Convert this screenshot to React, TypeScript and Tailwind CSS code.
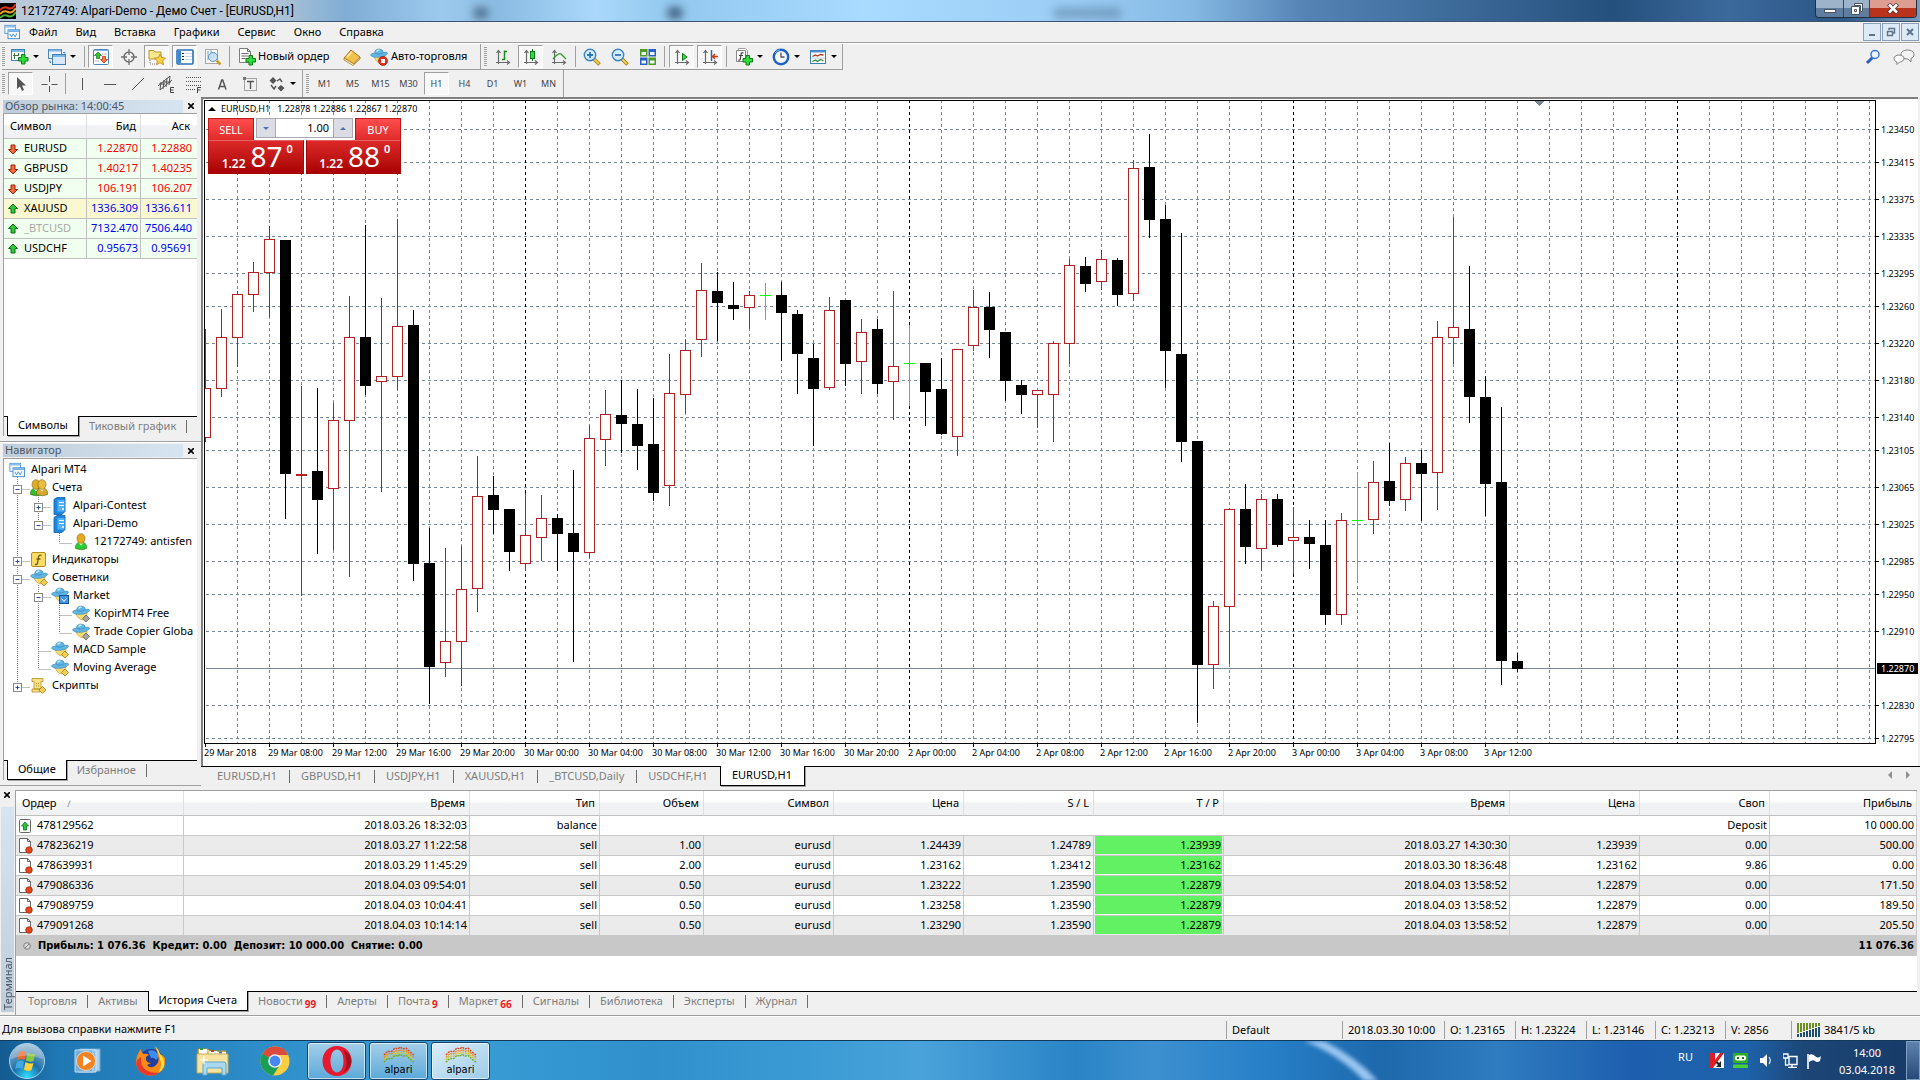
import { ReactNode } from "react";
import clsx from "clsx";

/* ---------- data ---------- */

// kind, high, body top, body bottom, low (all in window rows)
type Candle = ["r" | "k" | "g", number, number, number, number];

const PLOT_TOP = 101;
const CANDLE_STEP = 16;

const candles: Candle[] = [
    ["r", 329, 388, 438, 442], ["r", 309, 337, 389, 397], ["r", 291, 294, 338, 367], ["r", 262, 272, 295, 312],
    ["r", 226, 239, 273, 317], ["k", 240, 240, 474, 519], ["r", 386, 474, 476, 596], ["k", 388, 471, 500, 554],
    ["r", 403, 420, 489, 550], ["r", 296, 337, 421, 577], ["k", 225, 337, 386, 395], ["r", 298, 376, 382, 492],
    ["r", 219, 326, 377, 390], ["k", 310, 325, 564, 581], ["k", 528, 563, 667, 704], ["r", 548, 641, 663, 677],
    ["r", 546, 589, 642, 686], ["r", 456, 496, 589, 612], ["k", 476, 495, 510, 534], ["k", 509, 509, 552, 571],
    ["r", 493, 535, 564, 571], ["r", 495, 518, 538, 561], ["k", 514, 518, 534, 571], ["k", 470, 533, 552, 662],
    ["r", 425, 438, 553, 558], ["r", 390, 414, 440, 466], ["k", 380, 415, 424, 453], ["k", 389, 424, 446, 470],
    ["k", 398, 444, 493, 501], ["r", 354, 393, 486, 506], ["r", 339, 350, 395, 413], ["r", 263, 290, 340, 357],
    ["k", 272, 291, 303, 341], ["k", 282, 305, 309, 320], ["r", 291, 295, 308, 329], ["g", 283, 295, 296, 320],
    ["k", 282, 295, 313, 361], ["k", 310, 314, 354, 394], ["k", 344, 358, 389, 446], ["r", 297, 310, 388, 390],
    ["k", 300, 300, 364, 386], ["r", 319, 332, 362, 394], ["k", 319, 329, 384, 394], ["r", 291, 366, 382, 420],
    ["g", 325, 363, 364, 406], ["k", 363, 363, 392, 426], ["k", 358, 389, 434, 435], ["r", 349, 349, 437, 456],
    ["r", 290, 307, 346, 351], ["k", 292, 307, 330, 358], ["k", 332, 332, 381, 401], ["k", 380, 385, 395, 414],
    ["r", 390, 390, 395, 428], ["r", 341, 343, 395, 442], ["r", 259, 265, 344, 364], ["k", 257, 266, 284, 292],
    ["r", 250, 259, 282, 290], ["k", 258, 260, 295, 306], ["r", 160, 168, 294, 301], ["k", 134, 167, 220, 238],
    ["k", 205, 219, 351, 388], ["k", 233, 354, 442, 462], ["k", 441, 441, 665, 723], ["r", 601, 606, 665, 689],
    ["r", 508, 509, 607, 664], ["k", 484, 509, 547, 564], ["r", 494, 499, 549, 570], ["k", 494, 499, 545, 547],
    ["r", 507, 537, 541, 574], ["k", 520, 537, 544, 569], ["k", 520, 545, 615, 625], ["r", 513, 520, 615, 625],
    ["g", 473, 520, 521, 581], ["r", 461, 482, 520, 534], ["k", 443, 481, 501, 506], ["r", 457, 463, 500, 511],
    ["k", 450, 463, 474, 521], ["r", 321, 337, 473, 510], ["r", 217, 327, 338, 364], ["k", 266, 329, 397, 423],
    ["k", 376, 397, 484, 516], ["k", 407, 482, 661, 685], ["k", 653, 661, 669, 672],
];

const prices: [number, string][] = [
    [28, "1.23450"], [61, "1.23415"], [98, "1.23375"], [135, "1.23335"], [172, "1.23295"], [205, "1.23260"],
    [242, "1.23220"], [279, "1.23180"], [316, "1.23140"], [349, "1.23105"], [386, "1.23065"], [423, "1.23025"],
    [460, "1.22985"], [493, "1.22950"], [530, "1.22910"], [604, "1.22830"], [637, "1.22795"],
];

const times = [
    "29 Mar 2018", "29 Mar 08:00", "29 Mar 12:00", "29 Mar 16:00", "29 Mar 20:00", "30 Mar 00:00", "30 Mar 04:00",
    "30 Mar 08:00", "30 Mar 12:00", "30 Mar 16:00", "30 Mar 20:00", "2 Apr 00:00", "2 Apr 04:00", "2 Apr 08:00",
    "2 Apr 12:00", "2 Apr 16:00", "2 Apr 20:00", "3 Apr 00:00", "3 Apr 04:00", "3 Apr 08:00", "3 Apr 12:00",
];

const quotes = [
    { symbol: "EURUSD", bid: "1.22870", ask: "1.22880", up: false },
    { symbol: "GBPUSD", bid: "1.40217", ask: "1.40235", up: false },
    { symbol: "USDJPY", bid: "106.191", ask: "106.207", up: false },
    { symbol: "XAUUSD", bid: "1336.309", ask: "1336.611", up: true, selected: true },
    { symbol: "_BTCUSD", bid: "7132.470", ask: "7506.440", up: true, muted: true },
    { symbol: "USDCHF", bid: "0.95673", ask: "0.95691", up: true },
];

const orders = [
    ["478236219", "2018.03.27 11:22:58", "sell", "1.00", "eurusd", "1.24439", "1.24789", "1.23939", "2018.03.27 14:30:30", "1.23939", "0.00", "500.00"],
    ["478639931", "2018.03.29 11:45:29", "sell", "2.00", "eurusd", "1.23162", "1.23412", "1.23162", "2018.03.30 18:36:48", "1.23162", "9.86", "0.00"],
    ["479086336", "2018.04.03 09:54:01", "sell", "0.50", "eurusd", "1.23222", "1.23590", "1.22879", "2018.04.03 13:58:52", "1.22879", "0.00", "171.50"],
    ["479089759", "2018.04.03 10:04:41", "sell", "0.50", "eurusd", "1.23258", "1.23590", "1.22879", "2018.04.03 13:58:52", "1.22879", "0.00", "189.50"],
    ["479091268", "2018.04.03 10:14:14", "sell", "0.50", "eurusd", "1.23290", "1.23590", "1.22879", "2018.04.03 13:58:52", "1.22879", "0.00", "205.50"],
];

const orderColumns = [
    { title: "Время", width: "w-[286px]" },
    { title: "Тип", width: "w-[130px]" },
    { title: "Объем", width: "w-[104px]" },
    { title: "Символ", width: "w-[130px]" },
    { title: "Цена", width: "w-[130px]" },
    { title: "S / L", width: "w-[130px]" },
    { title: "T / P", width: "w-[130px]" },
    { title: "Время", width: "w-[286px]" },
    { title: "Цена", width: "w-[130px]" },
    { title: "Своп", width: "w-[130px]" },
    { title: "Прибыль", width: "" },
];

/* ---------- icons ---------- */

function Icon({ children, size = 18 }: { children: ReactNode; size?: number }) {
    return (
        <svg width={size} height={size} viewBox="0 0 18 18" className="block shrink-0" aria-hidden="true">
            {children}
        </svg>
    );
}

const Plus = ({ x, y }: { x: number; y: number }) => (
    <path
        transform={`translate(${x} ${y})`}
        d="M3.500 .5h3.500v3h3v3.500h-3v3h-3.500v-3h-3v-3.500h3z"
        fill="#2fdc3c"
        stroke="#0a7d14"
    />
);

const NewChartIcon = () => (
    <Icon>
        <rect x="0.5" y="1.500" width="13" height="11" fill="#fff" stroke="#3f7fb8" />
        <path d="M1 3h12" stroke="#7fb4e4" strokeWidth="2" />
        <path d="M3.500 5v6M2 7.500h5M7.500 5v3" stroke="#3c6f45" fill="none" />
        <Plus x={7} y={6} />
    </Icon>
);

const ProfilesIcon = () => (
    <Icon>
        <rect x="0.5" y="1.500" width="13" height="9" fill="#eaf3fc" stroke="#4b86bd" />
        <path d="M1 2.500h12" stroke="#7fb4e4" strokeWidth="2" />
        <rect x="4.500" y="6.500" width="13" height="10" fill="#d6e8f9" stroke="#3f7fb8" />
        <path d="M5 8h12" stroke="#7fb4e4" strokeWidth="2" />
        <path d="M2 12.500v2h1M15 4.500h2v1" stroke="#3f7fb8" fill="none" />
    </Icon>
);

const MarketWatchIcon = () => (
    <Icon>
        <rect x="1.500" y="1.500" width="15" height="15" rx="1" fill="#fff" stroke="#4b86bd" />
        <path d="M2 2.500h14" stroke="#7fb4e4" />
        <path d="M10 6h5M3 13h4" stroke="#bbb" />
        <path d="M6 4l3.500 3.500h-2v3h-3v-3h-2z" fill="#32c43a" stroke="#13761a" strokeWidth=".7" />
        <path d="M12 15l-3.500-3.500h2v-3h3v3h2z" fill="#ff7a40" stroke="#b22a08" strokeWidth=".7" />
    </Icon>
);

const TargetIcon = () => (
    <Icon>
        <circle cx="9" cy="9" r="5" fill="none" stroke="#707070" strokeWidth="1.500" />
        <path d="M9 1v6M9 11v6M1 9h6M11 9h6" stroke="#707070" strokeWidth="1.300" />
    </Icon>
);

const NavigatorIcon = () => (
    <Icon>
        <path d="M1 2.500h5l1 1.500h6v7H1z" fill="#fbe78e" stroke="#b8952c" />
        <path d="M2 12v4h5" stroke="#7a7a7a" strokeDasharray="1 1" fill="none" />
        <path d="M12 6l1.700 3.600 3.900.5-2.900 2.700.8 4-3.500-2-3.500 2 .8-4-2.900-2.700 3.900-.5z" fill="#ffd23c" stroke="#b8862c" strokeWidth=".8" />
    </Icon>
);

const TerminalIcon = () => (
    <Icon>
        <rect x="1" y="2" width="16" height="14" rx="1" fill="#fff" stroke="#2b6fb8" strokeWidth="1.600" />
        <rect x="2" y="3" width="3" height="12" fill="#3a86d6" />
        <path d="M6 5.500h2M6 8.500h2M6 11.500h2" stroke="#222" />
        <path d="M9 5.500h7M9 8.500h7M9 11.500h7" stroke="#c8daf0" />
    </Icon>
);

const TesterIcon = () => (
    <Icon>
        <rect x="1.500" y="1.500" width="12" height="14" fill="#fff" stroke="#a8a8a8" />
        <path d="M4 3v9M7 2v8M10 4v6" stroke="#6aa0d0" />
        <circle cx="9" cy="9" r="4.500" fill="#bfe0f8" fillOpacity=".8" stroke="#5f93c4" />
        <path d="M12.500 12.500l4 4" stroke="#c9a22c" strokeWidth="2.500" />
    </Icon>
);

const NewOrderIcon = () => (
    <Icon>
        <path d="M1.500 .5h8l3 3v11h-11z" fill="#fff" stroke="#7d7d7d" />
        <path d="M9.500 .5v3h3M3.500 5.500h7M3.500 8h7M3.500 10.500h4" stroke="#6d6d6d" fill="none" />
        <Plus x={7.500} y={7} />
    </Icon>
);

const BookIcon = () => (
    <Icon>
        <path d="M1 10l7-8 9 7-6 7z" fill="#f0c24a" stroke="#a8761c" />
        <path d="M1 10v2l9 5.500 7-6.500V9l-6 7z" fill="#fff3c8" stroke="#a8761c" strokeWidth=".8" />
        <path d="M4 9l5-5" stroke="#fbe7a0" strokeWidth="2" />
    </Icon>
);

function Hat({ badge }: { badge?: "stop" | "gold" | "gray" | "bag" }) {
    return (
        <Icon>
            <path d="M4 8q1 6 7 7 4-1 4-7z" fill="#f8dc70" stroke="#c09a38" strokeWidth=".6" />
            <path d="M.5 7Q1 5 4.500 5.200 5 1 9 1t4.500 3.500Q17 3.500 17.500 5q0 2.500-7 4.200Q2 10 .5 7z" fill="#62b6e4" stroke="#3784b4" strokeWidth=".6" />
            <path d="M4.800 5.500Q9 7.500 13.300 4.800" stroke="#3784b4" strokeWidth=".7" fill="none" />
            <path d="M6.500 3.500q1-1.500 3-1.500" stroke="#c8ebfb" strokeWidth="1.400" fill="none" />
            {badge === "stop" && (
                <>
                    <circle cx="13" cy="13" r="4.500" fill="#e0321e" stroke="#99170a" strokeWidth=".7" />
                    <rect x="11" y="11" width="4" height="4" fill="#fff" />
                </>
            )}
            {badge === "gold" && <path d="M14 10l3.500 3.500L14 17l-3.500-3.500z" fill="#f3cf52" stroke="#9c7a1c" strokeWidth=".8" />}
            {badge === "gray" && <path d="M14 10l3.500 3.500L14 17l-3.500-3.500z" fill="#a4a4a4" stroke="#666" strokeWidth=".8" />}
            {badge === "bag" && (
                <>
                    <rect x="8.500" y="8.500" width="9" height="8" fill="#3f93e6" stroke="#15549c" />
                    <path d="M10.500 11.500l2.500 3 2.500-3" stroke="#fff" fill="none" />
                </>
            )}
        </Icon>
    );
}

const Axes = ({ children }: { children: ReactNode }) => (
    <Icon>
        <path d="M4.500 3v13M2 14.500h13M2.500 5l2-2.500 2 2.500M13 12.500l2.500 2-2.500 2" stroke="#6a6a6a" strokeWidth="1.200" fill="none" />
        {children}
    </Icon>
);

const BarChartIcon = () => <Axes><path d="M10.500 2.500v9.500M10.500 3.500h2.500M8 11.500h2.500" stroke="#178a1e" strokeWidth="1.500" /></Axes>;
const CandleIcon = () => <Axes><path d="M10.500 1v12" stroke="#0b7a14" /><rect x="8.500" y="3.500" width="4" height="7" fill="#2ee03a" stroke="#0b7a14" /></Axes>;
const LineChartIcon = () => <Axes><path d="M3 11q6-7 8-5t5 5" stroke="#2f9a36" strokeWidth="1.300" fill="none" /></Axes>;
const AutoScrollIcon = () => <Axes><path d="M9.500 5.500l4.500 3.500-4.500 3.500z" fill="#2ee03a" stroke="#0b7a14" /></Axes>;
const ChartShiftIcon = () => <Axes><path d="M10.500 2v11" stroke="#2468b0" strokeWidth="1.500" /><path d="M17 8.500h-5M14 6l-2.500 2.500L14 11" stroke="#c83c10" strokeWidth="1.500" fill="none" /></Axes>;

const ZoomIcon = ({ minus }: { minus?: boolean }) => (
    <Icon>
        <path d="M11 11l5.500 5.500" stroke="#a07c14" strokeWidth="3.600" />
        <path d="M11 11l5 5" stroke="#f2d14a" strokeWidth="1.800" />
        <circle cx="7" cy="7" r="5.700" fill="#d4ecfb" stroke="#3a84c4" strokeWidth="1.400" />
        <path d={minus ? "M4 7h6" : "M4 7h6M7 4v6"} stroke="#2a78bc" strokeWidth="1.800" />
    </Icon>
);

const TileIcon = () => (
    <Icon>
        <rect x="1" y="1" width="7.500" height="7.500" fill="#4f9d1c" />
        <rect x="9.500" y="1" width="7.500" height="7.500" fill="#2a5fc8" />
        <rect x="1" y="9.500" width="7.500" height="7.500" fill="#2a5fc8" />
        <rect x="9.500" y="9.500" width="7.500" height="7.500" fill="#4f9d1c" />
        <path d="M2.500 4h4.500v3H2.500zM11 4h4.500v3H11zM2.500 12.500h4.500v3H2.500zM11 12.500h4.500v3H11z" fill="#eef4fc" />
    </Icon>
);

const IndicatorsIcon = () => (
    <Icon>
        <path d="M3.500 2v-1.500h7l2 2v10" fill="#fff" stroke="#a0a0a0" />
        <path d="M1.500 2.500h9v11h-9z" fill="#fff" stroke="#8a8a8a" />
        <path d="M8.500 5q-2-1-2.500 1.500L5.300 11q-.5 1.500-2 1M4 7.500h4" stroke="#444" strokeWidth="1.200" fill="none" />
        <Plus x={7.500} y={7} />
    </Icon>
);

const ClockIcon = () => (
    <Icon>
        <circle cx="9" cy="9" r="7.200" fill="#f6fafe" stroke="#1b62c4" strokeWidth="2.400" />
        <path d="M9 4.500V9h3.500" stroke="#555" strokeWidth="1.300" fill="none" />
        <path d="M3 5a7 7 0 0 1 5-3.200" stroke="#7ab4f0" fill="none" />
    </Icon>
);

const TemplateIcon = () => (
    <Icon>
        <rect x="1.500" y="2.500" width="15" height="13" fill="#fff" stroke="#3f7fb8" />
        <path d="M2 3.500h14" stroke="#4b8fd0" strokeWidth="2" />
        <path d="M3.500 8.500l3-1.500 2 1 3-1.500 3 .5" stroke="#a8321c" strokeWidth="1.300" fill="none" />
        <path d="M2 10h14" stroke="#b9cfe4" />
        <path d="M3.500 13.500l3-1.500 2 1.500 3-2 3 1.500" stroke="#2c8a34" strokeWidth="1.300" fill="none" />
    </Icon>
);

const CursorIcon = () => <Icon><path d="M5 2v12l3-2.500L10 16l2-1-2-4.500h4z" fill="#555" /></Icon>;
const CrosshairIcon = () => <Icon><path d="M9.500 1v6M9.500 11v6M1.500 9.500h6M11.500 9.500h6" stroke="#555" /></Icon>;
const VLineIcon = () => <Icon><path d="M9.500 3v12" stroke="#555" /></Icon>;
const HLineIcon = () => <Icon><path d="M3 9.500h12" stroke="#555" /></Icon>;
const TrendIcon = () => <Icon><path d="M3 15L15 3" stroke="#555" /></Icon>;
const ChannelIcon = () => (
    <Icon>
        <path d="M1 11L13 1M3 15L15 5M4 7l-1 8M7 5l-1 9M10 3L9 12M13 1l-1 9M2 9h6M7 7h7" stroke="#555" fill="none" />
        <path d="M17 12.500h-3.500v5H17M13.500 15h3" stroke="#444" fill="none" />
    </Icon>
);
const FiboIcon = () => (
    <Icon>
        <path d="M1 2.500h15M1 6.500h15M1 10.500h15M1 14.500h10" stroke="#555" strokeDasharray="1 1" />
        <path d="M16 12.500h-3.500V18M12.500 15h3" stroke="#444" fill="none" />
    </Icon>
);
const TextIcon = () => <Icon><path d="M5.500 14.500L8.800 5h.9L13 14.500M7 11.500h4.500" stroke="#555" strokeWidth="1.500" fill="none" /></Icon>;
const LabelIcon = () => (
    <Icon>
        <rect x="3.500" y="3.500" width="12" height="12" fill="none" stroke="#555" strokeDasharray="1 1" />
        <path d="M6 6.500h7M9.500 6v8" stroke="#555" strokeWidth="1.400" fill="none" />
        <path d="M2 2h3v3H2z" fill="#777" />
    </Icon>
);
const ArrowsIcon = () => (
    <Icon>
        <path d="M5 2l3.500 3.500L5 9 1.500 5.500zM13 10l3.500 3L13 16.500 9.500 13z" fill="#555" />
        <path d="M3 10l3 4 2-3M9 6l3-2 2 3" stroke="#555" strokeWidth="1.400" fill="none" />
    </Icon>
);

const MdiChartIcon = () => (
    <Icon size={16}>
        <rect x="1" y="1.500" width="12" height="9" fill="#fff" stroke="#4f94d4" />
        <path d="M1 3h12" stroke="#8fc1ec" strokeWidth="2" />
        <rect x="4.500" y="6.500" width="13" height="10" fill="#fff" stroke="#3a86d0" />
        <path d="M5 8h12" stroke="#6fb0ec" strokeWidth="2" />
        <path d="M6.500 11l2 3.500 2-3.500 2 3.500 2-4" stroke="#3a86d0" fill="none" />
    </Icon>
);

const Person = ({ x, head, body }: { x: number; head: string; body: string }) => (
    <g transform={`translate(${x} 0)`}>
        <path d="M.5 15.500Q0 9 6 9t5.500 6.500q-5 2.500-11 0z" fill={body} stroke="#3c6a14" strokeWidth=".6" />
        <path d="M3.500 9.500l2.500 3 2.500-3z" fill="#fff8d8" />
        <ellipse cx="6" cy="5.500" rx="4" ry="4.800" fill={head} stroke="#8a6410" strokeWidth=".6" />
    </g>
);
const AccountsIcon = () => (
    <Icon>
        <Person x={0} head="#dcae28" body="#2fbf2f" />
        <Person x={6} head="#e8bf40" body="#d8a92c" />
    </Icon>
);
const UserIcon = () => <Icon><Person x={3} head="#e8a91c" body="#28cf34" /></Icon>;
const ServerIcon = () => (
    <Icon>
        <path d="M3 2.500l3-2h8v14l-3 3H3z" fill="#1e87e0" stroke="#0f5aa4" strokeWidth=".8" />
        <path d="M6.500 3h7v11.500h-7z" fill="#53b2fa" />
        <path d="M8 5.500h5M8 8.500h5" stroke="#fff" />
        <circle cx="12" cy="12" r="1" fill="#fff" />
    </Icon>
);
const FunctionIcon = () => (
    <Icon>
        <rect x="1.500" y="1.500" width="14" height="14" rx="1.500" fill="#f9dc66" stroke="#b48e1e" />
        <path d="M11.500 4.500q-2.500-1-3 1.500l-1 6q-.5 2-2.500 1.300M6.500 8h4" stroke="#7a5a0c" strokeWidth="1.300" fill="none" />
    </Icon>
);
const ScriptIcon = () => (
    <Icon>
        <path d="M2 1.500h11v3h-2V12h-7V4.500H2zM2 12h8v3H2z" fill="#fae188" stroke="#b48e1e" strokeWidth=".8" />
        <path d="M6 6.500h4M6 9h4" stroke="#b48e1e" strokeDasharray="1 1" />
        <path d="M12.500 9.500l3.500 3.500-3.500 3.500L9 13z" fill="#f3cf52" stroke="#9c7a1c" strokeWidth=".8" />
    </Icon>
);

function TickArrow({ up }: { up: boolean }) {
    return (
        <svg width="12" height="12" viewBox="0 0 12 12" className={clsx("block shrink-0", !up && "rotate-180")} aria-hidden="true">
            <path d="M6 1l4.500 4.500H8V10H4V5.500H1.500z" fill={up ? "#2fc83a" : "#f5683a"} stroke={up ? "#0f6d18" : "#9c2408"} />
        </svg>
    );
}

function OrderIcon({ deposit }: { deposit?: boolean }) {
    return (
        <svg width="14" height="16" viewBox="0 0 14 16" className="block shrink-0" aria-hidden="true">
            {deposit ? (
                <>
                    <rect x="0.5" y="1.500" width="11" height="13" rx="1" fill="#fff" stroke="#666" />
                    <path d="M6 4l3.500 4H7.500v4h-3V8H2.500z" fill="#2fc83a" stroke="#0f6d18" strokeWidth=".8" />
                </>
            ) : (
                <>
                    <path d="M.5 .5h8l3 3v11H.5z" fill="#fff" stroke="#666" />
                    <path d="M8.500 .5v3h3" fill="none" stroke="#666" />
                    <circle cx="10" cy="12" r="3.300" fill="#e5451c" stroke="#8f2206" strokeWidth=".7" />
                </>
            )}
        </svg>
    );
}

/* ---------- shared bits ---------- */

const Grip = () => (
    <div className="h-[20px] w-[3px] shrink-0 bg-[repeating-linear-gradient(#a0a0a0_0_1px,#f0f0f0_1px_2px)]" />
);

const Sep = ({ className }: { className?: string }) => (
    <div className={clsx("h-[21px] w-px shrink-0 bg-[#a0a0a0]", className)} />
);

const Caret = () => <span className="h-0 w-0 border-x-[3px] border-t-[3px] border-x-transparent border-t-black" />;

const CloseMark = () => (
    <svg width="6" height="6" viewBox="0 0 6 6"><path d="M0 0l6 6M6 0L0 6" stroke="#000" strokeWidth="1.600" /></svg>
);

function Tool({ label, pressed, children }: { label: string; pressed?: boolean; children: ReactNode }) {
    return (
        <button
            type="button"
            aria-label={label}
            aria-pressed={pressed}
            className={clsx(
                "flex h-[23px] w-[25px] shrink-0 items-center justify-center border",
                pressed ? "border-[#a0a0a0] border-r-white border-b-white bg-[#f8f8f8]" : "border-transparent"
            )}
        >
            {children}
        </button>
    );
}

function DropTool({ label, children }: { label: string; children: ReactNode }) {
    return (
        <button type="button" aria-label={label} className="flex h-[23px] w-[37px] shrink-0 items-center gap-[4px] pl-[3px]">
            {children}
            <Caret />
        </button>
    );
}

type Tab = { text: string; count?: string; active?: boolean };

function TabStrip({ tabs, pad, lead }: { tabs: Tab[]; pad: string; lead: string }) {
    return (
        <div role="tablist" className="flex h-[20px] shrink-0 bg-[#f0f0f0] text-[11px]">
            <div className={clsx("border-t border-black", lead)} />
            {tabs.map((t, i) =>
                t.active ? (
                    <button key={i} type="button" role="tab" aria-selected="true" className={clsx("h-[20px] border border-t-0 border-black bg-white whitespace-nowrap shadow-[1px_1px_0_#a0a0a0]", pad)}>
                        {t.text}
                    </button>
                ) : (
                    <button key={i} type="button" role="tab" aria-selected="false" className="flex items-center border-t border-black whitespace-nowrap text-[#7d7d7d]">
                        <span className={pad}>
                            {t.text}
                            {t.count && <sub className="ml-[2px] text-[10px] font-bold text-[#f02020]">{t.count}</sub>}
                        </span>
                        {!tabs[i + 1]?.active && <span className="h-[13px] w-px bg-[#6d6d6d]" />}
                    </button>
                )
            )}
            <div className="flex-1 border-t border-black" />
        </div>
    );
}

function PanelTitle({ children }: { children: ReactNode }) {
    return (
        <div className="flex h-[14px] shrink-0 items-center justify-between pr-[5px] pl-[3px]">
            <h2 className="h-[13px] w-[180px] bg-linear-to-r from-[#bfcddb] to-[#d7e4f2] pl-[2px] text-[11px] leading-[11px] text-[#4c5866]">{children}</h2>
            <button type="button" aria-label="Закрыть" className="flex h-[10px] w-[10px] items-center justify-center">
                <CloseMark />
            </button>
        </div>
    );
}

/* ---------- title, menu, toolbars ---------- */

function TitleBar() {
    return (
        <header className="relative flex h-[22px] shrink-0 items-start overflow-hidden border-b border-[#3d5570] bg-[linear-gradient(90deg,#b9c9d8_0,#b4c6d8_14%,#7fadd4_18%,#9cc9ee_23%,#8bbbe2_26%,#a9d8fb_31%,#93c8ee_35%,#a9daff_45%,#9bcdf4_56%,#86b9e4_62%,#5483b4_68%,#24507d_84%,#3c6a9c_90%,#2a5585_96%,#7d9cbc_100%)]">
            <div className="absolute top-[7px] left-[473px] h-[12px] w-[16px] rounded-full bg-[#41607c] opacity-80 blur-xs" />
            <div className="absolute top-[7px] left-[667px] h-[12px] w-[16px] rounded-full bg-[#345572] opacity-90 blur-xs" />
            <div className="absolute top-[7px] left-[1052px] h-[12px] w-[70px] rounded-full bg-[#5a7da0] opacity-50 blur-xs" />
            <svg width="16" height="16" viewBox="0 0 16 16" className="relative mt-[3px] shrink-0" aria-hidden="true">
                <rect width="16" height="16" fill="#000" />
                <path d="M0 7q4-4 8-2t8-4" stroke="#e03018" strokeWidth="2" fill="none" />
                <path d="M0 11q4-4 8-2t8-4" stroke="#f0a020" strokeWidth="2" fill="none" />
                <path d="M0 15q4-4 8-2t8-4" stroke="#48b030" strokeWidth="2" fill="none" />
            </svg>
            <h1 className="relative ml-[5px] pt-[2px] font-[Roboto,sans-serif] text-[12px] leading-[18px]">12172749: Alpari-Demo - Демо Счет - [EURUSD,H1]</h1>
            <div className="relative mr-[3px] ml-auto flex h-[18px] overflow-hidden rounded-b-[4px] border border-t-0 border-[#1f2f42]">
                <button type="button" aria-label="Свернуть" className="flex w-[27px] items-center justify-center bg-linear-to-b from-[#9db3ca] from-45% to-[#5f7d9e] to-50%">
                    <span className="mt-[4px] h-[4px] w-[12px] border border-[#4a5563] bg-white" />
                </button>
                <button type="button" aria-label="Восстановить" className="flex w-[27px] items-center justify-center border-x border-[#33475e] bg-linear-to-b from-[#9db3ca] from-45% to-[#5f7d9e] to-50%">
                    <svg width="12" height="12" viewBox="0 0 12 12"><path d="M3.500 .5h8v8h-2v-6h-6z" fill="#fff" stroke="#4a5563" /><path d="M.5 3.500h8v8h-8zM3.500 6.500h2v2h-2z" fill="#fff" stroke="#4a5563" /></svg>
                </button>
                <button type="button" aria-label="Закрыть окно" className="flex w-[46px] items-center justify-center bg-linear-to-b from-[#dd9d90] from-45% to-[#b8321c] to-50%">
                    <svg width="12" height="11" viewBox="0 0 12 11"><path d="M1.500 1l9 9M10.500 1l-9 9" stroke="#4a3038" strokeWidth="4" /><path d="M2 1.500l8 8M10 1.500l-8 8" stroke="#fff" strokeWidth="2.500" /></svg>
                </button>
            </div>
        </header>
    );
}

const mdi = "flex h-[18px] w-[18px] items-center justify-center border border-[#8ba0b8] bg-[#dce9f7]";

function MenuBar() {
    return (
        <nav className="flex h-[21px] shrink-0 items-center border-b border-[#a0a0a0] pr-[1px] pl-[4px] text-[11px]">
            <MdiChartIcon />
            {["Файл", "Вид", "Вставка", "Графики", "Сервис", "Окно", "Справка"].map((m) => (
                <button key={m} type="button" className="px-[9px] leading-[18px]">{m}</button>
            ))}
            <div className="ml-auto flex gap-px">
                <button type="button" aria-label="Свернуть график" className={mdi}><svg width="10" height="10"><path d="M2 8h6" stroke="#5f7288" strokeWidth="2" /></svg></button>
                <button type="button" aria-label="Восстановить график" className={mdi}><svg width="10" height="10"><path d="M3 3V1.500h5.500V6H7M1.500 4.500h5v4h-5z" fill="none" stroke="#5f7288" strokeWidth="1.400" /></svg></button>
                <button type="button" aria-label="Закрыть график" className={mdi}><svg width="10" height="10"><path d="M2 2l6 6M8 2L2 8" stroke="#5f7288" strokeWidth="2" /></svg></button>
            </div>
        </nav>
    );
}

function Toolbars() {
    return (
        <>
            <div className="flex h-[27px] shrink-0 items-stretch border-t border-white pl-[2px]">
                <div className="flex w-[479px] items-center border-r border-b border-[#a0a0a0]">
                    <Grip />
                    <div className="ml-[3px] flex">
                        <DropTool label="Новый график"><NewChartIcon /></DropTool>
                        <DropTool label="Профили"><ProfilesIcon /></DropTool>
                    </div>
                    <Sep className="mr-[3px] ml-[2px]" />
                    <div className="flex gap-[3px]">
                        <Tool label="Обзор рынка" pressed><MarketWatchIcon /></Tool>
                        <Tool label="Окно данных"><TargetIcon /></Tool>
                        <Tool label="Навигатор" pressed><NavigatorIcon /></Tool>
                        <Tool label="Терминал" pressed><TerminalIcon /></Tool>
                        <Tool label="Тестер стратегий"><TesterIcon /></Tool>
                    </div>
                    <Sep className="mr-[5px] ml-[4px]" />
                    <button type="button" className="flex w-[101px] shrink-0 items-center gap-[2px] pl-[3px] text-[11px] whitespace-nowrap"><NewOrderIcon />Новый ордер</button>
                    <div className="mx-[3px]"><Tool label="MetaEditor"><BookIcon /></Tool></div>
                    <button type="button" className="flex shrink-0 items-center gap-[3px] pl-[3px] text-[11px] whitespace-nowrap"><Hat badge="stop" />Авто-торговля</button>
                </div>
                <div className="flex w-[362px] items-center border-r border-b border-[#a0a0a0] pl-[3px]">
                    <Grip />
                    <div className="ml-[3px] flex gap-[3px]">
                        <Tool label="Бары"><BarChartIcon /></Tool>
                        <Tool label="Свечи" pressed><CandleIcon /></Tool>
                        <Tool label="Линия"><LineChartIcon /></Tool>
                    </div>
                    <Sep className="mr-[3px] ml-[4px]" />
                    <div className="flex gap-[3px]">
                        <Tool label="Увеличить"><ZoomIcon /></Tool>
                        <Tool label="Уменьшить"><ZoomIcon minus /></Tool>
                        <Tool label="Упорядочить окна"><TileIcon /></Tool>
                    </div>
                    <Sep className="mx-[4px]" />
                    <div className="flex gap-[3px]">
                        <Tool label="Автопрокрутка" pressed><AutoScrollIcon /></Tool>
                        <Tool label="Сдвиг графика" pressed><ChartShiftIcon /></Tool>
                    </div>
                    <Sep className="mr-[5px] ml-[4px]" />
                    <DropTool label="Индикаторы"><IndicatorsIcon /></DropTool>
                    <DropTool label="Периоды"><ClockIcon /></DropTool>
                    <DropTool label="Шаблоны"><TemplateIcon /></DropTool>
                </div>
                <div className="mr-[5px] ml-auto flex items-center gap-[12px]">
                    <button type="button" aria-label="Поиск">
                        <svg width="16" height="16" viewBox="0 0 16 16"><path d="M8 8l-6 6" stroke="#2a5fc0" strokeWidth="3" /><circle cx="10" cy="5.500" r="4" fill="#eef6ff" stroke="#3a74d8" strokeWidth="1.500" /></svg>
                    </button>
                    <button type="button" aria-label="Чат">
                        <svg width="22" height="16" viewBox="0 0 22 16"><path d="M14.500 1c4 0 6.500 2 6.500 4.500 0 2-1.500 3.500-3 4V13l-3-3C10 10 8 8 8 5.500S10.500 1 14.500 1z" fill="#f4f4f4" stroke="#808080" /><path d="M6 6c3 0 5 1.500 5 3.500S9 13 6.500 13L4 15.500V13C2 12.500 1 11 1 9.500 1 7.500 3 6 6 6z" fill="#fff" stroke="#808080" /></svg>
                    </button>
                </div>
            </div>
            <div className="flex h-[27px] shrink-0 items-stretch pl-[2px]">
                <div className="flex w-[301px] items-center border-r border-[#a0a0a0]">
                    <Grip />
                    <div className="ml-[3px] flex gap-[3px]">
                        <Tool label="Курсор" pressed><CursorIcon /></Tool>
                        <Tool label="Перекрестие"><CrosshairIcon /></Tool>
                    </div>
                    <Sep className="mr-[3px] ml-[4px]" />
                    <div className="flex gap-[3px]">
                        <Tool label="Вертикальная линия"><VLineIcon /></Tool>
                        <Tool label="Горизонтальная линия"><HLineIcon /></Tool>
                        <Tool label="Трендовая линия"><TrendIcon /></Tool>
                        <Tool label="Равноудаленный канал"><ChannelIcon /></Tool>
                        <Tool label="Линии Фибоначчи"><FiboIcon /></Tool>
                        <Tool label="Текст"><TextIcon /></Tool>
                        <Tool label="Текстовая метка"><LabelIcon /></Tool>
                        <DropTool label="Стрелки"><ArrowsIcon /></DropTool>
                    </div>
                </div>
                <div className="flex w-[261px] items-center border-r border-[#a0a0a0] pl-[3px]">
                    <Grip />
                    <div className="ml-[3px] flex gap-[3px] text-[9px] text-[#444]">
                        {["M1", "M5", "M15", "M30", "H1", "H4", "D1", "W1", "MN"].map((p) => (
                            <Tool key={p} label={p} pressed={p === "H1"}>{p}</Tool>
                        ))}
                    </div>
                </div>
            </div>
        </>
    );
}

/* ---------- left dock ---------- */

function MarketWatch() {
    return (
        <section className="flex min-h-0 flex-1 flex-col border-b border-[#a0a0a0] pt-[2px] pb-[5px]">
            <PanelTitle>Обзор рынка: 14:00:45</PanelTitle>
            <div className="mr-[4px] ml-[3px] flex min-h-0 flex-1 flex-col border-t border-l border-[#a0a0a0]">
                <div className="min-h-0 flex-1 overflow-hidden bg-white">
                    <table className="w-full table-fixed border-separate border-spacing-0 text-[11px]">
                        <thead>
                            <tr className="h-[25px] bg-linear-to-b from-white from-40% to-[#f1f2f4] to-50% text-right">
                                <th className="w-[83px] border-r border-b border-[#dedfe1] border-b-[#c0c0c0] p-0 pl-[6px] text-left font-normal">Символ</th>
                                <th className="w-[54px] border-r border-b border-[#dedfe1] border-b-[#c0c0c0] p-0 pr-[4px] font-normal">Бид</th>
                                <th className="border-b border-[#c0c0c0] p-0 pr-[7px] font-normal">Аск</th>
                            </tr>
                        </thead>
                        <tbody>
                            {quotes.map((q) => (
                                <tr key={q.symbol} className={clsx("h-[20px]", q.selected ? "bg-[#f9f8d0]" : "bg-[#f0fff0]", q.up ? "text-[#0000ff]" : "text-[#ff0000]")}>
                                    <td className="border-r border-b border-[#c0c0c0] p-0">
                                        <span className={clsx("flex items-center gap-[5px] pl-[3px]", q.muted ? "text-[#a9a9a9]" : "text-black")}>
                                            <TickArrow up={q.up} />
                                            {q.symbol}
                                        </span>
                                    </td>
                                    <td className="border-r border-b border-[#c0c0c0] p-0 pr-[2px] text-right">{q.bid}</td>
                                    <td className="border-b border-[#c0c0c0] p-0 pr-[5px] text-right">{q.ask}</td>
                                </tr>
                            ))}
                        </tbody>
                    </table>
                </div>
                <TabStrip lead="w-[3px]" pad="px-[10px]" tabs={[{ text: "Символы", active: true }, { text: "Тиковый график" }]} />
            </div>
        </section>
    );
}

// through, ends and opens name the guide columns that run past, stop in, or start below the row
type TreeRow = { level: number; text: string; icon: ReactNode; box?: "+" | "-"; through: number[]; ends?: number; opens?: number };

const tree: TreeRow[] = [
    { level: 0, text: "Alpari MT4", icon: <MdiChartIcon />, through: [], opens: 1 },
    { level: 1, text: "Счета", icon: <AccountsIcon />, box: "-", through: [1], opens: 2 },
    { level: 2, text: "Alpari-Contest", icon: <ServerIcon />, box: "+", through: [1, 2] },
    { level: 2, text: "Alpari-Demo", icon: <ServerIcon />, box: "-", through: [1], ends: 2, opens: 3 },
    { level: 3, text: "12172749: antisfen", icon: <UserIcon />, through: [1], ends: 3 },
    { level: 1, text: "Индикаторы", icon: <FunctionIcon />, box: "+", through: [1] },
    { level: 1, text: "Советники", icon: <Hat badge="gold" />, box: "-", through: [1], opens: 2 },
    { level: 2, text: "Market", icon: <Hat badge="bag" />, box: "-", through: [1, 2], opens: 3 },
    { level: 3, text: "KopirMT4 Free", icon: <Hat badge="gray" />, through: [1, 2, 3] },
    { level: 3, text: "Trade Copier Globa", icon: <Hat badge="gray" />, through: [1, 2], ends: 3 },
    { level: 2, text: "MACD Sample", icon: <Hat badge="gold" />, through: [1, 2] },
    { level: 2, text: "Moving Average", icon: <Hat badge="gold" />, through: [1], ends: 2 },
    { level: 1, text: "Скрипты", icon: <ScriptIcon />, box: "+", through: [], ends: 1 },
];

function TreeItem({ row }: { row: TreeRow }) {
    const col = (l: number) => 13 + 21 * (l - 1) + 0.5;
    const width = 5 + 21 * row.level;
    const own = col(row.level);
    return (
        <li className="flex h-[18px] items-center whitespace-nowrap">
            <svg width={width} height="18" className="block shrink-0 overflow-visible" aria-hidden="true">
                <g stroke="#808080" strokeDasharray="1 1" fill="none">
                    {row.through.map((l) => <path key={l} d={`M${col(l)} 0V18`} />)}
                    {row.ends && <path d={`M${col(row.ends)} 0V10`} />}
                    {row.level > 0 && <path d={`M${own} 10.5H${width}`} />}
                    {row.opens && <path d={`M${col(row.opens)} 16V18`} />}
                </g>
                {row.box && (
                    <g>
                        <rect x={own - 4} y="6.500" width="8" height="8" fill="#fff" stroke="#8a8a8a" />
                        <path d={`M${own - 2} 10.500h4${row.box === "+" ? "m-2-2v4" : ""}`} stroke="#2a4fa0" fill="none" />
                    </g>
                )}
            </svg>
            <span className="mr-[4px] w-[18px]">{row.icon}</span>
            {row.text}
        </li>
    );
}

function Navigator() {
    return (
        <section className="flex min-h-0 flex-1 flex-col border-t border-b border-t-white border-b-[#a0a0a0] pt-[1px] pb-[5px]">
            <PanelTitle>Навигатор</PanelTitle>
            <div className="mr-[4px] ml-[3px] flex min-h-0 flex-1 flex-col border-t border-l border-[#a0a0a0]">
                <ul className="min-h-0 flex-1 overflow-hidden bg-white pt-[2px] text-[11px]">
                    {tree.map((row) => <TreeItem key={row.text} row={row} />)}
                </ul>
                <TabStrip lead="w-[3px]" pad="px-[10px]" tabs={[{ text: "Общие", active: true }, { text: "Избранное" }]} />
            </div>
        </section>
    );
}

/* ---------- chart ---------- */

const candleColor = { r: "#b22222", k: "#000000", g: "#00ff00" };

function Plot() {
    const columns = Array.from({ length: 52 }, (_, i) => (i + 1) * 32);
    return (
        <svg className="block h-full w-full overflow-hidden" shapeRendering="crispEdges" role="img" aria-label="EURUSD,H1">
            <g transform="translate(0.5 0.5)">
                <g stroke="#778899" strokeDasharray="3 3">
                    {prices.map(([y]) => <line key={y} x1="0.5" x2="100%" y1={y} y2={y} />)}
                    {columns.map((x) => (
                        <line key={x} x1={x} x2={x} y1="-1.5" y2="100%" stroke={x % 384 === 320 ? "#000" : "#778899"} />
                    ))}
                </g>
                <line x1="0" x2="100%" y1="567" y2="567" stroke="#778899" />
                {candles.map(([kind, high, top, bottom, low], i) => {
                    const x = i * CANDLE_STEP;
                    const color = candleColor[kind];
                    return (
                        <g key={i} stroke={color}>
                            <line x1={x} x2={x} y1={high - PLOT_TOP - 0.5} y2={low - PLOT_TOP - 0.5} />
                            {kind === "g" ? (
                                <line x1={x - 5.5} x2={x + 5.5} y1={top - PLOT_TOP} y2={top - PLOT_TOP} />
                            ) : (
                                <rect x={x - 5} y={top - PLOT_TOP} width="10" height={bottom - top - 1} fill={kind === "r" ? "#fff" : "#000"} />
                            )}
                        </g>
                    );
                })}
            </g>
            <path d="M1329 0h11l-5.500 5z" fill="#778899" />
        </svg>
    );
}

const redTop = "bg-linear-to-b from-[#ff4d4d] to-[#df2a2a]";
const redBottom = "bg-linear-to-b from-[#dc2828] to-[#a80000]";

function OneClick() {
    return (
        <div className="absolute top-[17px] left-[3px] w-[193px] bg-white text-white">
            <div className="flex">
                <button type="button" className={clsx("h-[22px] w-[46px] border border-b-0 border-[#c01818] text-[11px] leading-[19px]", redTop)}>SELL</button>
                <div className="mx-[2px] flex h-[20px] w-[97px] border border-[#a9a9b4] bg-white">
                    <button type="button" aria-label="Меньше" className="flex w-[19px] items-center justify-center border-r border-[#a9a9b4] bg-[#dcdce4]"><span className="h-0 w-0 border-x-[3px] border-t-[3px] border-x-transparent border-t-[#5070b0]" /></button>
                    <input aria-label="Объем" defaultValue="1.00" className="min-w-0 flex-1 bg-white pr-[4px] text-right text-[11px] text-black outline-none" />
                    <button type="button" aria-label="Больше" className="flex w-[19px] items-center justify-center border-l border-[#a9a9b4] bg-[#dcdce4]"><span className="h-0 w-0 border-x-[3px] border-b-[3px] border-x-transparent border-b-[#5070b0]" /></button>
                </div>
                <button type="button" className={clsx("h-[22px] w-[46px] border border-b-0 border-[#c01818] text-[11px] leading-[19px]", redTop)}>BUY</button>
            </div>
            <div className="flex gap-[2px]">
                {[["1.22", "87", "0"], ["1.22", "88", "0"]].map(([big, pips, point], i) => (
                    <div key={i} className={clsx("flex h-[34px] flex-1 items-end justify-center border border-[#a80808] border-t-[#e86060] pl-[3px]", redBottom)}>
                        <span className="mr-[5px] pb-[2px] text-[12px] leading-[14px] font-semibold">{big}</span>
                        <span className="text-[28px] leading-[33px]">{pips}</span>
                        <span className="ml-[4px] self-start pt-[2px] text-[11px] leading-[11px] font-semibold">{point}</span>
                    </div>
                ))}
            </div>
        </div>
    );
}

function ChartWindow() {
    const tabs = ["EURUSD,H1", "GBPUSD,H1", "USDJPY,H1", "XAUUSD,H1", "_BTCUSD,Daily", "USDCHF,H1", "EURUSD,H1"];
    return (
        <main className="flex min-w-0 flex-1 flex-col">
            <div className="mr-[2px] flex min-h-0 flex-1 flex-col border-t-2 border-l-2 border-[#808080] bg-white pt-px pl-px text-[9px]">
                <div className="flex min-h-0 flex-1">
                    <div className="relative min-w-0 flex-1 border border-black">
                        <Plot />
                        <div className="absolute top-0 left-[3px] flex h-[15px] items-center text-[9px]">
                            <span className="mr-[5px] h-0 w-0 border-x-[4px] border-b-[4px] border-x-transparent border-b-black" />
                            <span className="whitespace-pre">EURUSD,H1   1.22878 1.22886 1.22867 1.22870</span>
                        </div>
                        <OneClick />
                    </div>
                    <svg className="block h-full w-[42px] shrink-0">
                        {prices.map(([y, p]) => (
                            <g key={y}>
                                <rect x="0" y={y + 1} width="3" height="1" />
                                <text x="5" y={y + 5}>{p}</text>
                            </g>
                        ))}
                        <rect x="1" y="563" width="41" height="11" />
                        <text x="5" y="572" fill="#fff">1.22870</text>
                    </svg>
                </div>
                <svg className="block h-[22px] w-full shrink-0">
                    {times.map((t, i) => (
                        <g key={t}>
                            <rect x={1 + i * 64} y="0" width="1" height="3" />
                            <text x={i * 64} y="12">{t}</text>
                        </g>
                    ))}
                </svg>
            </div>
            <div className="relative">
                <TabStrip lead="w-[5px]" pad="pl-[11px] pr-[12px]" tabs={tabs.map((text, i) => ({ text, active: i === tabs.length - 1 }))} />
                <div className="absolute top-[5px] right-[10px] flex gap-[14px]">
                    <button type="button" aria-label="Назад" className="h-0 w-0 border-y-[4px] border-r-[4px] border-y-transparent border-r-[#909090]" />
                    <button type="button" aria-label="Вперед" className="h-0 w-0 border-y-[4px] border-l-[4px] border-y-transparent border-l-[#909090]" />
                </div>
            </div>
        </main>
    );
}

/* ---------- terminal ---------- */

const cell = "overflow-hidden border-r border-b border-[#c8c8c8] p-0 pr-[2px] whitespace-nowrap";

function Terminal() {
    return (
        <section className="flex h-[230px] shrink-0 border-b border-[#a0a0a0] pt-[4px]">
            <div className="flex w-[15px] shrink-0 flex-col items-center pr-px pb-[3px]">
                <button type="button" aria-label="Закрыть терминал" className="mb-[7px] flex h-[10px] w-[10px] items-center justify-center">
                    <CloseMark />
                </button>
                <h2 className="w-[13px] flex-1 rotate-180 bg-linear-to-b from-[#bfcddb] to-[#d7e4f2] pt-[2px] text-[11px] leading-[13px] text-[#4c5866] [writing-mode:vertical-rl]">Терминал</h2>
            </div>
            <div className="mr-[3px] flex min-w-0 flex-1 flex-col border-t border-l border-[#a0a0a0] pb-[4px]">
                <div className="min-h-0 flex-1 overflow-hidden bg-white">
                    <table className="w-full table-fixed border-separate border-spacing-0 text-right text-[11px]">
                        <thead>
                            <tr className="h-[25px] bg-linear-to-b from-white from-40% to-[#f1f2f4] to-50%">
                                <th className="w-[168px] border-r border-b border-[#dedfe1] border-b-[#c0c0c0] p-0 pl-[6px] text-left font-normal">
                                    Ордер <span className="ml-[8px] text-[9px] text-[#808080]">∕</span>
                                </th>
                                {orderColumns.map((c, i) => (
                                    <th key={i} className={clsx("border-r border-b border-[#dedfe1] border-b-[#c0c0c0] p-0 pr-[4px] font-normal", c.width)}>{c.title}</th>
                                ))}
                            </tr>
                        </thead>
                        <tbody>
                            <tr className="h-[20px]">
                                <td className={cell}><span className="flex items-center gap-[4px] pl-[3px]"><OrderIcon deposit />478129562</span></td>
                                <td className={cell}>2018.03.26 18:32:03</td>
                                <td className={cell}>balance</td>
                                <td className={cell} colSpan={8}>Deposit</td>
                                <td className={cell}>10 000.00</td>
                            </tr>
                            {orders.map((o, r) => (
                                <tr key={o[0]} className={clsx("h-[20px]", r % 2 === 0 && "bg-[#ebebeb]")}>
                                    {o.map((v, i) => {
                                        if (i === 0) return <td key={i} className={cell}><span className="flex items-center gap-[4px] pl-[3px]"><OrderIcon />{v}</span></td>;
                                        if (i === 7) return <td key={i} className="border-r border-b border-[#c8c8c8] p-0 px-px pb-px"><span className="block h-[18px] bg-[#62f162] pr-px leading-[18px]">{v}</span></td>;
                                        return <td key={i} className={cell}>{v}</td>;
                                    })}
                                </tr>
                            ))}
                        </tbody>
                        <tfoot>
                            <tr className="h-[20px] bg-[#c8c8c8] font-['DejaVu_Sans_Condensed',sans-serif] font-bold">
                                <td className="p-0 text-left whitespace-pre" colSpan={11}>
                                    <span className="flex items-center gap-[7px] pl-[7px]">
                                        <svg width="8" height="8" viewBox="0 0 8 8"><circle cx="4" cy="4" r="3.300" fill="#ddd" stroke="#7d7d7d" /><path d="M2 6l4-4" stroke="#7d7d7d" /></svg>
                                        {"Прибыль: 1 076.36  Кредит: 0.00  Депозит: 10 000.00  Снятие: 0.00"}
                                    </span>
                                </td>
                                <td className="p-0 pr-[3px]">11 076.36</td>
                            </tr>
                        </tfoot>
                    </table>
                </div>
                <TabStrip
                    lead="w-[2px]"
                    pad="px-[10px]"
                    tabs={[
                        { text: "Торговля" }, { text: "Активы" }, { text: "История Счета", active: true }, { text: "Новости", count: "99" },
                        { text: "Алерты" }, { text: "Почта", count: "9" }, { text: "Маркет", count: "66" }, { text: "Сигналы" },
                        { text: "Библиотека" }, { text: "Эксперты" }, { text: "Журнал" },
                    ]}
                />
            </div>
        </section>
    );
}

function StatusBar() {
    const item = "h-[18px] border-l border-[#a0a0a0] pl-[5px] leading-[17px] whitespace-nowrap";
    return (
        <div className="flex h-[24px] shrink-0 items-center border-t border-white pt-[2px] text-[11px]">
            <span className="flex-1 pl-[2px]">Для вызова справки нажмите F1</span>
            <span className={clsx(item, "w-[116px]")}>Default</span>
            <span className={clsx(item, "w-[102px]")}>2018.03.30 10:00</span>
            <span className={clsx(item, "w-[71px]")}>O: 1.23165</span>
            <span className={clsx(item, "w-[71px]")}>H: 1.23224</span>
            <span className={clsx(item, "w-[69px]")}>L: 1.23146</span>
            <span className={clsx(item, "w-[70px]")}>C: 1.23213</span>
            <span className={clsx(item, "w-[66px]")}>V: 2856</span>
            <span className={clsx(item, "flex w-[129px] items-center gap-[3px]")}>
                <svg width="24" height="14" aria-hidden="true">
                    {Array.from({ length: 8 }, (_, i) => (
                        <g key={i}>
                            <rect x={i * 3} y="0" width="2" height={10 - i} fill="#6b8e23" />
                            <rect x={i * 3} y={11 - i} width="2" height={3 + i} fill="#1c4f72" />
                        </g>
                    ))}
                </svg>
                3841/5 kb
            </span>
        </div>
    );
}

/* ---------- taskbar ---------- */

function AlpariIcon() {
    return (
        <span className="flex flex-col items-center">
            <svg width="32" height="17" viewBox="0 0 32 17" fill="none" aria-hidden="true">
                {["#e2451c", "#ee8a24", "#d8c42a", "#6fae2c"].map((c, i) => (
                    <path key={c} d="M1 9l4-4 3 1 4-4 3 1 2-2 3 2 3-1 4 4 4 3" transform={`translate(0 ${i * 2.4})`} stroke={c} strokeDasharray="2 1" strokeWidth="1.400" />
                ))}
            </svg>
            <span className="font-['DejaVu_Sans_Condensed',sans-serif] text-[11px] leading-[13px] text-black">alpari</span>
        </span>
    );
}

const taskButton = "flex h-[38px] w-[59px] shrink-0 items-center justify-center rounded-[3px] border border-[#16456d] shadow-[inset_0_0_0_1px_rgba(255,255,255,0.6)]";

function Taskbar() {
    return (
        <footer className="relative flex h-[40px] shrink-0 items-center overflow-hidden border-t border-[#123a5c] bg-[linear-gradient(90deg,#135a90_0,#1f78b4_3%,#2b8ac6_12%,#3c9fd6_22%,#2f90cc_34%,#3a9bd4_42%,#4aa2da_48%,#2a84c6_56%,#3d90d0_60%,#2780c8_66%,#1e68ac_72%,#2f7cc0_78%,#1d5fae_85%,#1e62aa_91%,#1d4676_94%,#163a68_100%)] pl-[8px]">
            <svg className="absolute top-0 left-[1290px] h-[40px] w-[110px]" viewBox="0 0 110 40" aria-hidden="true">
                <path d="M14 0h20q32 16 54 40H74Q50 14 14 0z" fill="#b8dcff" fillOpacity=".8" className="blur-[2px]" />
            </svg>
            <button type="button" aria-label="Пуск" className="shrink-0">
                <svg width="38" height="38" viewBox="0 0 38 38">
                    <defs>
                        <radialGradient id="orb" cx=".5" cy=".95" r=".9">
                            <stop offset="0" stopColor="#2fe0ff" />
                            <stop offset=".45" stopColor="#1c6fa8" />
                            <stop offset="1" stopColor="#8fb4cf" />
                        </radialGradient>
                    </defs>
                    <circle cx="19" cy="19" r="17.500" fill="url(#orb)" stroke="#a8d4ee" />
                    <path d="M11 10q4-2 7 0l-1.500 8q-3-2-7.500 0z" fill="#ef6a28" />
                    <path d="M19.500 10.500q4 2.500 8 1l-2 7.500q-4 1.500-7.500-.5z" fill="#8cc63e" />
                    <path d="M9 19.500q4-2 7 0l-1.500 7.500q-3-2-7.500 0z" fill="#3fa9ea" />
                    <path d="M17.500 20q4 2.500 8 1L23.500 28q-4 2-7.500-.5z" fill="#fcd23c" />
                    <path d="M3 17a16 15 0 0 1 32 0q-16-7-32 0z" fill="#fff" fillOpacity=".25" />
                </svg>
            </button>
            <button type="button" aria-label="Проигрыватель" className="ml-[28px] shrink-0">
                <svg width="30" height="28" viewBox="0 0 30 28">
                    <path d="M6 2h20v22H6z" fill="#a9d2ec" stroke="#6ea9d0" /><path d="M4 3h18v22H4z" fill="#8cc0e4" stroke="#cfe6f5" />
                    <path d="M1 3h18v22H1z" fill="#76b0da" stroke="#b9dcf2" />
                    <circle cx="12" cy="14" r="9.500" fill="#f58220" stroke="#fff" strokeWidth=".6" />
                    <path d="M9 8.500l8.500 5.500L9 19.500z" fill="#fff" />
                </svg>
            </button>
            <button type="button" aria-label="Firefox" className="ml-[31px] shrink-0">
                <svg width="32" height="32" viewBox="0 0 32 32">
                    <circle cx="16" cy="17" r="13" fill="#233f9e" />
                    <path d="M13 6q6-2 9 2 3 4-1 7-2-3-5-2z" fill="#3a8ef0" />
                    <path d="M20 1q4 4 5 8 3 1 5 4 1 10-5 14-6 5-14 3Q2 27 1 18 1 10 6 4q0 4 3 5 3-1 5 1-4 1-3 5 1 3 5 3l-4 2q3 4 8 1 5-4 3-10-1-4-3-10z" fill="#ff8a16" />
                    <path d="M1 18q1 9 10 12 8 2 14-3-8 2-14-2-6-4-5-13-4 2-5 6z" fill="#e8382c" />
                    <path d="M20 1q4 4 5 8 5 4 4 12-2 5-6 7 5-7 2-14-1-7-5-13z" fill="#ffe03c" />
                </svg>
            </button>
            <button type="button" aria-label="Проводник" className="ml-[29px] shrink-0">
                <svg width="34" height="32" viewBox="0 0 34 32">
                    <path d="M2 4h10l2 2h16v21H2z" fill="#e9c766" stroke="#b5913a" />
                    <path d="M3 4h8v5H3zM13 6h8v5h-8zM21 7h9v4h-9z" fill="#fff" />
                    <path d="M4 3h3v2H4z" fill="#2e9a3a" /><path d="M15 5h3v2h-3z" fill="#d83a2a" /><path d="M23 6.500h3v2h-3z" fill="#2a7ad8" />
                    <path d="M1 9h31v19H1z" fill="#f6e3a0" stroke="#c9a956" />
                    <path d="M9 17h19q2 0 2 3v10h-4v-7H11v7H7V20q0-3 2-3z" fill="#a9d8f0" stroke="#5fa8cf" />
                    <path d="M8 11v8M4 15h8" stroke="#fff" strokeWidth="1.200" />
                </svg>
            </button>
            <button type="button" aria-label="Chrome" className="ml-[29px] shrink-0">
                <svg width="32" height="32" viewBox="0 0 32 32">
                    <circle cx="16" cy="16" r="14.500" fill="#ffcd41" />
                    <path d="M16 16L3.500 8.500A14.500 14.500 0 0 0 14 30.400l6-9z" fill="#1b9f58" />
                    <path d="M16 16L3.500 8.700A14.500 14.500 0 0 1 29.300 10H16z" fill="#dc4a3e" />
                    <circle cx="16" cy="16" r="6.800" fill="#f4f4f4" />
                    <circle cx="16" cy="16" r="5.400" fill="#4587f3" />
                </svg>
            </button>
            <button type="button" aria-label="Opera" className={clsx(taskButton, "ml-[16px] bg-linear-to-b from-[#a4cfe9] to-[#5ba9d8]")}>
                <svg width="32" height="32" viewBox="0 0 32 32">
                    <path fillRule="evenodd" d="M16 1c8.500 0 14.500 6.500 14.500 15S24.500 31 16 31 1.500 24.500 1.500 16 7.500 1 16 1zm0 3.500c-4 0-6.500 5-6.500 11.500s2.500 11.500 6.500 11.500 6.500-5 6.500-11.500S20 4.500 16 4.500z" fill="#e8182e" />
                    <path d="M22.500 5q8 4 8 11t-8 11.500Q26 22 25.500 16T22.500 5z" fill="#a8101e" />
                </svg>
            </button>
            <button type="button" className={clsx(taskButton, "ml-[3px] bg-linear-to-b from-[#a4cfe9] to-[#5ba9d8]")}><AlpariIcon /></button>
            <button type="button" className={clsx(taskButton, "ml-[3px] bg-linear-to-br from-[#dceefa] to-[#9ccbe8]")}><AlpariIcon /></button>

            <div className="relative ml-auto flex h-full items-center text-[11px] text-white">
                <span className="mr-[17px] -mt-[6px]">RU</span>
                <svg width="14" height="15" viewBox="0 0 14 15" className="mr-[9px]" aria-hidden="true">
                    <rect width="14" height="15" fill="#fff" />
                    <path d="M0 0h5v7l5-7h4L5 12l-2 3H0z" fill="#e01c24" /><path d="M7 8l2 2 2-2v6H6l2-2-2-2z" fill="#222" />
                </svg>
                <svg width="15" height="15" viewBox="0 0 15 15" className="mr-[12px]" aria-hidden="true">
                    <rect width="15" height="10" rx="1" fill="#2fae22" /><rect y="11.500" width="15" height="3.500" rx="1" fill="#48d038" />
                    <rect x="2" y="2.500" width="11" height="5" rx="2" fill="#fff" /><path d="M4 4h2v2H4zM9 4h2v2H9z" fill="#1c7a14" />
                </svg>
                <svg width="13" height="15" viewBox="0 0 13 15" className="mr-[10px]" aria-hidden="true">
                    <path d="M0 5h3l4-4v13l-4-4H0z" fill="#fff" /><path d="M9 4q2.500 3.500 0 7" stroke="#dfe8f2" strokeWidth="1.200" fill="none" />
                </svg>
                <svg width="15" height="15" viewBox="0 0 15 15" className="mr-[9px]" aria-hidden="true">
                    <path d="M6 3.500h8v8H6zM9 12v2M5 14.500h9" stroke="#fff" strokeWidth="1.400" fill="none" /><path d="M0 1h5v4H0zM2.500 5v7h3" stroke="#fff" strokeWidth="1.300" fill="none" />
                </svg>
                <svg width="15" height="16" viewBox="0 0 15 16" aria-hidden="true">
                    <path d="M1 1v15" stroke="#fff" strokeWidth="1.600" /><path d="M2 2q3-2 6 1t6 0l-1 5q-3 2-5 0T2 9z" fill="#fff" />
                </svg>
                <div className="w-[84px] pl-[6px] text-center leading-[17px]">
                    <p>14:00</p>
                    <p>03.04.2018</p>
                </div>
                <button type="button" aria-label="Показать рабочий стол" className="h-[39px] w-[14px] border border-[#7f9dc0] bg-linear-to-b from-[#5f83ad] to-[#27497a]" />
            </div>
        </footer>
    );
}

export default function App() {
    return (
        <div className="flex h-screen flex-col overflow-hidden bg-[#f0f0f0] font-['Noto_Sans','Open_Sans',sans-serif] text-[11px] text-black">
            <TitleBar />
            <MenuBar />
            <Toolbars />
            <div className="flex min-h-0 flex-1">
                <aside className="flex w-[201px] shrink-0 flex-col">
                    <MarketWatch />
                    <Navigator />
                </aside>
                <ChartWindow />
            </div>
            <Terminal />
            <StatusBar />
            <Taskbar />
        </div>
    );
}
